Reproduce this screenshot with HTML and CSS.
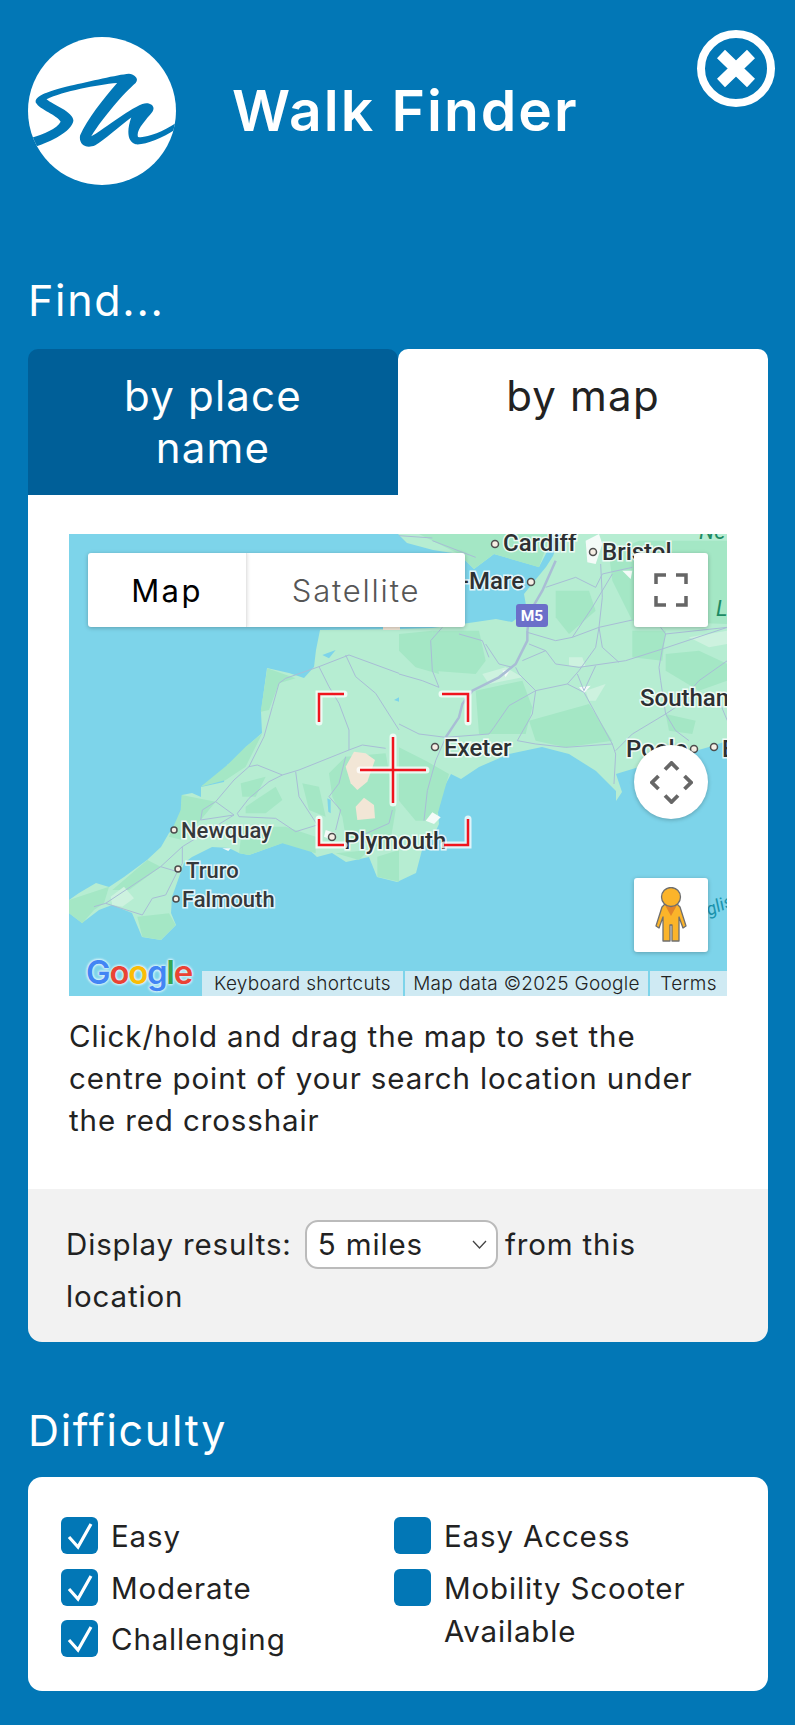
FILE: index.html
```html
<!DOCTYPE html>
<html lang="en">
<head>
<meta charset="utf-8">
<title>Walk Finder</title>
<link rel="stylesheet" href="styles.css">
</head>
<body>
<div class="page">
  <header class="header">
    <div class="brand">
      <svg class="logo" viewBox="25 23 440 440" aria-hidden="true">
        <defs><clipPath id="logo-clip"><circle cx="245" cy="243" r="220"/></clipPath></defs>
        <circle cx="245" cy="243" r="220" fill="#fff"/>
        <path clip-path="url(#logo-clip)" fill="#0277b6" d="M20 328L38 322C70 312 112 296 122 275C112 255 60 240 48 218C44 200 80 185 150 168C210 155 290 135 325 132C345 135 355 148 345 160C310 190 250 260 213 318C240 305 320 240 365 222C390 215 405 230 395 245C375 270 345 300 352 320C375 325 430 305 475 272L475 290C430 322 375 345 345 342C320 335 318 300 332 262C300 285 250 330 225 345C195 358 175 340 180 315C200 270 250 205 290 160C230 165 130 185 80 208C100 225 160 245 160 272C155 305 90 335 50 348L20 360Z"/>
      </svg>
      <h1 class="title">Walk Finder</h1>
    </div>
    <svg class="close" viewBox="0 0 78 77" aria-label="Close">
      <ellipse cx="39" cy="38.500" rx="35" ry="34.500" fill="none" stroke="#fff" stroke-width="8"/>
      <path d="M24 24L54 53M54 24L24 53" fill="none" stroke="#fff" stroke-width="11.500"/>
    </svg>
  </header>

  <h2 class="section-title find-title">Find...</h2>
  <section class="find-card">
    <div class="tabs">
      <div class="tab tab-off">by place name</div>
      <div class="tab tab-on">by map</div>
    </div>
    <div class="pane">
      <div class="map">
        <svg class="map-art" viewBox="0 0 658 462">
          <rect width="658" height="462" fill="#7dd4ea"/>
          <path fill="#b6edd2" d="M492 0L484 22L477 33L463 50L455 60L458 77L443 88L427 85L393 90L363 94L330 95L251 96L247 116L245 133L235 144L220 139L198 134L195 156L192 178L193 199L177 213L170 223L158 231L155 248L132 253L132 263L123 259L113 261L112 276L110 289L100 299L92 313L78 326L55 343L40 353L27 349L10 359L0 366L0 379L13 389L30 376L43 371L63 379L73 403L92 406L107 391L102 379L103 363L115 329L123 323L143 313L160 314L170 319L180 321L213 309L233 309L248 323L263 319L277 328L300 323L308 343L328 348L347 339L353 316L364 303L370 290L368 267L382 240L392 245L410 233L440 220L473 213L500 220L527 237L547 257L547 267L553 258L547 240L570 233L640 213L658 207L658 0Z"/>
          <path fill="#b6edd2" d="M329 0L338 9L364 16L390 20L405 35L425 20L470 33L480 14L486 0Z"/>
          <g transform="translate(0,116) scale(.33333)">
            <g fill="#a4e7c5">
              <path d="M595 55L680 85L630 100L600 180L575 185Z"/>
              <path d="M580 250L530 350L470 390L395 410L475 345L530 290Z"/>
              <path d="M338 435L440 455L395 510L340 570L300 560L335 480Z"/>
              <path d="M0 750L120 710L105 760L75 780L40 820L0 790Z"/>
              <path d="M205 800L300 790L320 825L275 870L220 860Z"/>
              <path d="M235 630L275 650L180 720L130 720Z"/>
              <path d="M515 400L590 380L560 440L520 440Z"/>
              <path d="M530 470L620 410L640 450L590 490L530 490Z"/>
              <path d="M700 400L750 410L770 500L720 480Z"/>
              <path d="M780 370L830 320L950 310L980 480L960 600L830 560L820 500L790 440Z"/>
              <path d="M510 610L520 530L650 530L740 560L740 610L640 580L540 615Z"/>
              <path d="M800 610L900 600L870 630Z"/>
              <path d="M925 620L990 600L990 695L925 680Z"/>
            </g>
            <path fill="#cdf2df" d="M125 740L165 710L195 745L160 770L130 765Z"/>
            <g fill="#f2e6d6">
              <path d="M830 350L855 305L890 310L918 330L895 395L865 420L845 400Z"/>
              <path d="M860 470L885 443L915 465L918 505L865 510Z"/>
            </g>
            <g fill="#7dd4ea">
              <path d="M775 445L785 450L785 490L778 485Z"/>
              <path d="M760 15L800 0L780 25Z"/>
              <path d="M975 150L990 142L990 155Z"/>
            </g>
            <g fill="#f4fbf8">
              <path d="M770 540L800 550L790 570L765 560Z"/>
              <path d="M460 595L485 595L478 603Z"/>
            </g>
            <g class="roads">
              <path d="M840 15L750 50L650 85L630 100L610 170L585 260L540 350L495 390L440 455L400 480L395 510"/>
              <path d="M750 50L780 110L810 160L840 240L840 300L690 360L640 375L600 395L540 445L505 490L510 500L620 505L680 545L745 525"/>
              <path d="M540 350L565 345L640 375M680 365L690 440L745 525M840 300L880 285L950 295M830 15L860 80L920 130L990 240M840 15L990 70"/>
              <path d="M830 320L810 400L780 440L815 480L800 540M440 455L495 495L395 510M495 495L340 590L275 650L110 760L75 770"/>
              <path d="M110 760L220 795L250 745L290 735L325 665M340 590L340 640L325 665M275 650L325 665M970 480L960 520L870 560"/>
            </g>
          </g>
          <g transform="translate(330,0) scale(.33333)">
            <g fill="#a4e7c5">
              <path d="M100 290L240 290L260 380L230 420L100 410Z"/>
              <path d="M230 470L370 440L400 520L380 600L240 600Z"/>
              <path d="M390 560L570 510L640 620L500 640L410 620Z"/>
              <path d="M470 170L570 170L590 230L510 300L470 250Z"/>
              <path d="M700 290L800 290L790 380L700 370Z"/>
              <path d="M800 410L900 470L985 440L985 390L900 350L800 360Z"/>
              <path d="M800 540L890 560L880 600L810 590Z"/>
              <path d="M0 640L80 680L150 720L110 860L50 860L0 800Z"/>
              <path d="M0 300L100 290L120 420L50 400L0 350Z"/>
              <path d="M630 60L720 20L985 20L985 270L700 260L640 140Z"/>
              <path d="M0 0L60 0L180 60L225 105L285 60L420 100L455 0Z"/>
            </g>
            <g fill="#cdf2df">
              <path d="M250 420L320 400L370 430L270 450Z"/>
              <path d="M510 370L550 370L560 400L510 395Z"/>
              <path d="M560 470L620 450L590 500L570 500Z"/>
              <path d="M870 310L985 290L985 330L930 340Z"/>
            </g>
            <g fill="#f4fbf8">
              <path d="M310 410L335 405L320 430Z"/>
              <path d="M540 460L575 455L555 478Z"/>
              <path d="M670 110L700 110L695 135Z"/>
              <path d="M560 20L600 0L610 30L590 90L565 85Z"/>
              <path d="M80 860L100 835L125 850L105 870Z"/>
            </g>
            <path class="m5" d="M385 290L385 320L350 390L300 430L220 470L190 510L180 550L140 610M385 290L395 230L430 170L470 80"/>
            <g class="roads">
              <path d="M385 295L470 320L520 310L600 280L700 258M390 330L440 350L470 390L540 400L680 380L790 345L985 280M440 350L370 380"/>
              <path d="M600 280L610 340L660 385M600 280L590 340L540 410L505 450L410 470L360 420L350 400"/>
              <path d="M505 450L555 475L640 630L650 660L645 750M535 420L555 470L590 395"/>
              <path d="M410 470L400 540L355 620L410 630L500 640L640 630M410 470L330 515L285 580L270 600L140 610"/>
              <path d="M140 610L60 600L0 570M140 610L110 680L85 770L75 860M120 460L100 410L95 320L130 280M120 460L70 440L0 420"/>
              <path d="M260 330L300 390L340 400M180 300L250 320L270 370M790 345L800 300L785 280"/>
              <path d="M790 345L780 400L785 440L800 540L830 590L870 620M985 380L900 440L830 520L800 540L700 600L650 650"/>
              <path d="M605 90L610 190L600 280M440 160L530 130L590 160L610 120L700 100M520 310L580 220L640 120M800 300L985 280M960 500L985 560"/>
              <path d="M100 20L230 70M0 5L100 12"/>
            </g>
          </g>
          <g fill="#f2e6d6">
            <path d="M314 90H331V96H314Z"/>
          </g>
          <g class="city">
            <text x="434" y="17" class="big">Cardiff</text>
            <text x="533" y="26" class="big">Bristol</text>
            <text x="455" y="55" text-anchor="end" class="big">-Mare</text>
            <text x="571" y="172" class="big">Southam</text>
            <text x="375" y="222" class="big">Exeter</text>
            <text x="557" y="223" class="big">Poole</text>
            <text x="653" y="223" class="big">B</text>
            <text x="112" y="304">Newquay</text>
            <text x="117" y="344">Truro</text>
            <text x="113" y="373">Falmouth</text>
            <text x="275" y="315" class="big">Plymouth</text>
          </g>
          <g fill="#f5eee4" stroke="#4d4d4d" stroke-width="1.500">
            <circle cx="426" cy="10" r="3.500"/>
            <circle cx="524" cy="18" r="3.500"/>
            <circle cx="462" cy="48" r="3.500"/>
            <circle cx="366" cy="213" r="3.500"/>
            <circle cx="625" cy="215" r="3.500"/>
            <circle cx="645" cy="213" r="3.500"/>
            <circle cx="105" cy="296" r="3"/>
            <circle cx="109" cy="335" r="3"/>
            <circle cx="107" cy="365" r="3"/>
            <circle cx="263" cy="303" r="3.500"/>
          </g>
          <rect x="447" y="70" width="32" height="23" rx="3" fill="#6b6fc9"/>
          <text x="463" y="87" class="shield" text-anchor="middle">M5</text>
          <text x="630" y="5" class="green">Ne</text>
          <text x="647" y="82" class="green">L</text>
          <text x="640" y="382" class="sea" transform="rotate(-22 640 382)">glis</text>
          <g fill="none" stroke-linecap="round">
            <path stroke="#fff" stroke-opacity=".75" stroke-width="7" d="M275 160H250V188M373 160H399V188M250 285V311H275M375 311H399V285M324 203V269M291 236H357"/>
            <path stroke="#f0141e" stroke-width="2.500" stroke-linecap="butt" d="M275 160H250V188M373 160H399V188M250 285V311H275M375 311H399V285M324 203V269M291 236H357"/>
          </g>
        </svg>

        <div class="map-type">
          <div class="type-btn type-active">Map</div>
          <div class="type-btn">Satellite</div>
        </div>
        <div class="map-btn fullscreen">
          <svg viewBox="0 0 34 34" class="map-icon"><path d="M2 11V2H12M22 2H32V11M32 23V32H22M12 32H2V23" fill="none" stroke="#666" stroke-width="3.500"/></svg>
        </div>
        <div class="map-btn compass">
          <svg viewBox="0 0 43 43" class="compass-icon"><path d="M15 8.500L21.500 2L28 8.500M8.500 15L2 21.500L8.500 28M34.500 15L41 21.500L34.500 28M15 34.500L21.500 41L28 34.500" fill="none" stroke="#666" stroke-width="3.800"/></svg>
        </div>
        <div class="map-btn pegman">
          <svg viewBox="0 0 34 56" class="pegman-icon">
            <path d="M11 17L23 17L26 20L32 39L29 41L25 30L25 54L18 54L18 38L16 38L16 54L9 54L9 30L5 41L2 39L8 20Z" fill="#fbb42a" stroke="#6f6f6f" stroke-width="1.300" stroke-linejoin="round"/>
            <path d="M11 18H23L17 29Z" fill="#e2842a"/>
            <circle cx="17" cy="10" r="9.500" fill="#fbb42a" stroke="#6f6f6f" stroke-width="1.300"/>
          </svg>
        </div>
        <div class="google" aria-label="Google"><span class="g-blue">G</span><span class="g-red">o</span><span class="g-yellow">o</span><span class="g-blue">g</span><span class="g-green">l</span><span class="g-red">e</span></div>
        <div class="attribution">
          <span class="attr attr-keys">Keyboard shortcuts</span>
          <span class="attr attr-data">Map data ©2025 Google</span>
          <span class="attr attr-terms">Terms</span>
        </div>
      </div>
      <p class="hint">Click/hold and drag the map to set the centre point of your search location under the red crosshair</p>
    </div>
    <div class="results">
      <span class="results-label">Display results:</span>
      <select class="miles"><option>5 miles</option></select>
      <span>from this</span>
      <span>location</span>
    </div>
  </section>

  <h2 class="section-title difficulty-title">Difficulty</h2>
  <section class="difficulty-card">
    <div class="check-col">
      <label class="check"><span class="box"><svg viewBox="0 0 37 37" class="tick"><path d="M8 20L17 30L30 7" fill="none" stroke="#fff" stroke-width="3.200"/></svg></span><span class="check-text">Easy</span></label>
      <label class="check"><span class="box"><svg viewBox="0 0 37 37" class="tick"><path d="M8 20L17 30L30 7" fill="none" stroke="#fff" stroke-width="3.200"/></svg></span><span class="check-text">Moderate</span></label>
      <label class="check"><span class="box"><svg viewBox="0 0 37 37" class="tick"><path d="M8 20L17 30L30 7" fill="none" stroke="#fff" stroke-width="3.200"/></svg></span><span class="check-text">Challenging</span></label>
    </div>
    <div class="check-col">
      <label class="check"><span class="box"></span><span class="check-text">Easy Access</span></label>
      <label class="check"><span class="box"></span><span class="check-text">Mobility Scooter Available</span></label>
    </div>
  </section>
</div>
</body>
</html>
```

FILE: styles.css
```css
* { box-sizing: border-box; }
html, body { margin: 0; }
body {
  background: #0277b6;
  color: #222;
  font-family: Inter, "Noto Sans", sans-serif;
  height: 1725px;
  overflow: hidden;
}
.page { padding: 30px 27px 0 28px; }

.header { display: flex; justify-content: space-between; align-items: flex-start; }
.brand { display: flex; align-items: center; gap: 56px; margin-top: 7px; }
.logo { width: 148px; height: 148px; display: block; }
.title { margin: 0; color: #fff; font-size: 57px; font-weight: 600; line-height: 60px; letter-spacing: 2px; }
.close { width: 78px; height: 77px; display: block; margin-right: -7px; }

.section-title { margin: 0; color: #fff; font-weight: 400; font-size: 43px; line-height: 46px; letter-spacing: 1.700px; }
.find-title { margin-top: 92px; }
.difficulty-title { margin-top: 65px; }

.find-card { margin-top: 26px; border-radius: 0 0 14px 14px; overflow: hidden; }
.tabs { display: grid; grid-template-columns: 370px 370px; }
.tab { height: 146px; padding: 21px 50px; text-align: center; font-size: 42px; line-height: 52px; letter-spacing: 1.200px; border-radius: 10px 10px 0 0; }
.tab-off { background: #005f98; color: #fff; }
.tab-on { background: #fff; color: #222; }

.pane { background: #fff; padding: 39px 41px 0; height: 694px; }
.map { position: relative; width: 658px; height: 462px; overflow: hidden; }
.map-art { display: block; width: 658px; height: 462px; }
.roads path { fill: none; stroke: #a8bdd6; stroke-width: 1px; vector-effect: non-scaling-stroke; }
.m5 { fill: none; stroke: #a9bdd5; stroke-width: 2.500px; vector-effect: non-scaling-stroke; }
.city text { font-family: Roboto, sans-serif; font-size: 22px; font-weight: 500; fill: #35383b; stroke: #fff; stroke-width: 3px; stroke-opacity: .8; paint-order: stroke; }
.city text.big { font-size: 24px; fill: #2d3033; }
.shield { font-family: Roboto, sans-serif; font-size: 15.500px; font-weight: 700; fill: #fff; }
.green { font-family: Roboto, sans-serif; font-size: 22px; font-style: italic; fill: #1d8a63; }
.sea { font-family: Roboto, sans-serif; font-size: 18px; font-style: italic; fill: #1a93ad; }

.map-type { position: absolute; left: 19px; top: 19px; width: 377px; height: 74px; display: flex; background: #fff; border-radius: 3px; box-shadow: 0 1px 4px rgba(0,0,0,.25); overflow: hidden; }
.type-btn { display: flex; align-items: center; justify-content: center; font-size: 31px; color: #565656; font-weight: 300; letter-spacing: 1.800px; width: 218px; }
.type-active { width: 159px; color: #000; font-weight: 400; letter-spacing: 2.400px; border-right: 1px solid #e6e6e6; box-shadow: 1px 0 3px rgba(0,0,0,.1); }

.map-btn { position: absolute; left: 565px; width: 74px; height: 74px; background: #fff; border-radius: 3px; box-shadow: 0 1px 4px rgba(0,0,0,.25); display: flex; align-items: center; justify-content: center; }
.fullscreen { top: 19px; }
.compass { top: 211px; border-radius: 50%; }
.pegman { top: 344px; }
.map-icon { width: 34px; height: 34px; }
.compass-icon { width: 43px; height: 43px; }
.pegman-icon { width: 34px; height: 56px; }

.google { position: absolute; left: 17px; top: 416px; font-family: Inter, sans-serif; font-size: 33px; font-weight: 600; line-height: 44px; letter-spacing: -1.300px; text-shadow: 0 0 2px #d8f3fa, 0 0 3px #d8f3fa, 0 0 3px #d8f3fa, 0 0 3px #d8f3fa; }
.g-blue { color: #4285f4; }
.g-red { color: #ea4335; }
.g-yellow { color: #fbbc05; }
.g-green { color: #34a853; }

.attribution { position: absolute; left: 133px; right: 0; bottom: 0; height: 25px; display: flex; gap: 2px; font-size: 19px; line-height: 26px; letter-spacing: .3px; color: #222; font-weight: 300; }
.attr { background: #cfeaf3; text-align: center; white-space: nowrap; overflow: hidden; }
.attr-keys { width: 201px; }
.attr-data { width: 243px; }
.attr-terms { width: 77px; }

.hint { margin: 19px 0 0; font-size: 29.500px; line-height: 42px; font-weight: 400; letter-spacing: .9px; }

.results { background: #f2f2f2; height: 153px; padding: 29px 30px 0 38px; font-size: 29.500px; line-height: 52px; letter-spacing: .85px; }
.results-label { margin-right: 4px; }
.miles { appearance: none; width: 193px; height: 49px; margin-right: -2px; padding: 0 30px 0 11px; font-family: inherit; font-size: 29.500px; letter-spacing: .85px; color: #222; background: #fff url("data:image/svg+xml,%3Csvg xmlns='http://www.w3.org/2000/svg' width='15' height='9'%3E%3Cpath d='M1 1L7.500 8L14 1' fill='none' stroke='%23444' stroke-width='1.300'/%3E%3C/svg%3E") no-repeat right 9px center; border: 2px solid #bbb; border-radius: 13px; vertical-align: baseline; }

.difficulty-card { margin-top: 24px; height: 214px; background: #fff; border-radius: 14px; padding: 40px 30px 0 33px; display: grid; grid-template-columns: 333px 1fr; }
.check-col { display: flex; flex-direction: column; gap: 10.500px; }
.check { display: flex; align-items: flex-start; gap: 13px; font-size: 29.500px; line-height: 43px; letter-spacing: .85px; }
.box { flex: none; width: 37px; height: 37px; border-radius: 6px; background: #0277b6; display: block; }
.tick { display: block; width: 37px; height: 37px; }
.check-text { display: block; margin-top: -2px; }
```
